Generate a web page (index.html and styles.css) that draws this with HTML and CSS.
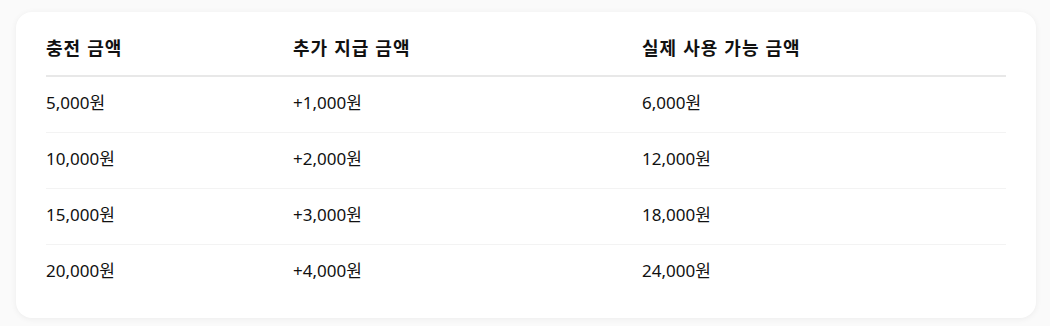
FILE: index.html
```html
<!DOCTYPE html>
<html lang="ko">
<head>
<meta charset="utf-8">
<link rel="stylesheet" href="styles.css">
</head>
<body>
<div class="card">
  <table class="rates">
    <colgroup>
      <col class="c1">
      <col class="c2">
      <col class="c3">
    </colgroup>
    <thead>
      <tr><th>충전 금액</th><th>추가 지급 금액</th><th>실제 사용 가능 금액</th></tr>
    </thead>
    <tbody>
      <tr><td>5,000원</td><td>+1,000원</td><td>6,000원</td></tr>
      <tr><td>10,000원</td><td>+2,000원</td><td>12,000원</td></tr>
      <tr><td>15,000원</td><td>+3,000원</td><td>18,000원</td></tr>
      <tr><td>20,000원</td><td>+4,000원</td><td>24,000원</td></tr>
    </tbody>
  </table>
</div>
</body>
</html>
```
FILE: styles.css
```css
html, body {
  margin: 0;
  background: #fafafa;
}
body {
  padding: 12px 14px 9px 16px;
  font-family: "Noto Sans", "Noto Sans CJK KR", sans-serif;
  color: #111;
}
.card {
  background: #fff;
  border-radius: 16px;
  box-shadow: 0 1px 6px rgba(0, 0, 0, 0.06);
  padding: 7px 30px 18px;
}
.rates {
  width: 100%;
  border-collapse: collapse;
  table-layout: fixed;
  font-size: 17px;
  line-height: 24px;
}
.c1 { width: 247px; }
.c2 { width: 349px; }
.rates th {
  text-align: left;
  font-family: "Noto Sans CJK KR", sans-serif;
  font-size: 18px;
  letter-spacing: 1px;
  font-weight: 700;
  padding: 16px 0 16px;
  border-bottom: 2px solid #e8e8e8;
}
.rates td {
  padding: 14px 0 17px;
  border-bottom: 1px solid #f3f3f3;
}
.rates tbody tr:last-child td {
  border-bottom: none;
}
```
